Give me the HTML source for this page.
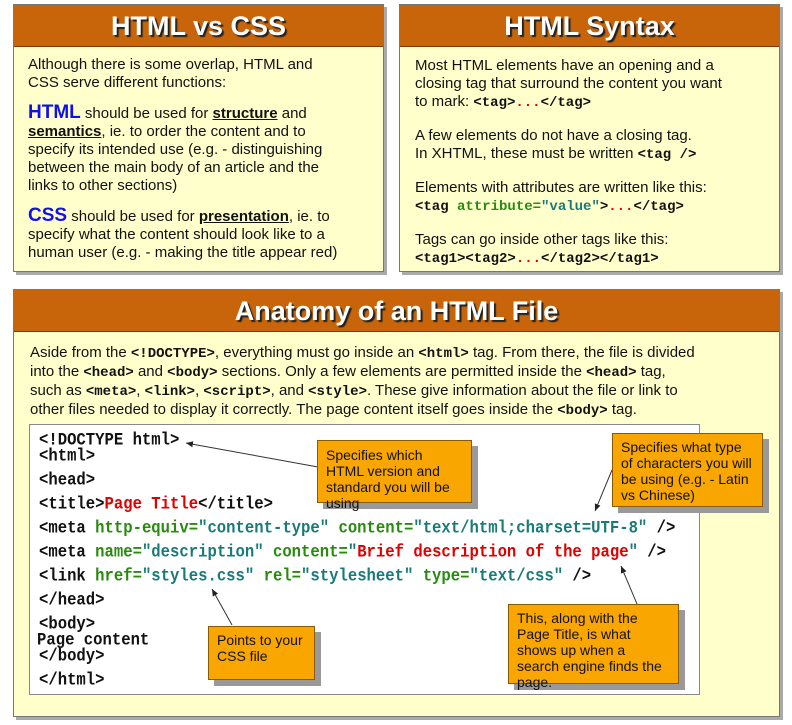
<!DOCTYPE html>
<html><head><style>
*{margin:0;padding:0;box-sizing:border-box}
body{width:792px;height:725px;background:#fff;position:relative;font-family:"Liberation Sans",sans-serif;color:#111;overflow:hidden}
.box{position:absolute;background:#ffffcc;border:1px solid #777;box-shadow:3px 3px 0 #aaa}
.hd{position:absolute;left:0;right:0;top:0;height:42px;background:#c8640a;border-bottom:1px solid #7a3a00;color:#fff;font-weight:bold;font-size:27px;text-align:center;line-height:42px;text-shadow:2px 2px 1px #222}
.t{position:absolute;font-size:15px;line-height:18px;white-space:nowrap}
.m{font-family:"Liberation Mono",monospace;font-weight:bold;font-size:14px}
.r{color:#e00000}.g{color:#2a8a10}.v{color:#1a7a7a}
.big{color:#1010ee;font-weight:bold;font-size:19px}
.u{font-weight:bold;text-decoration:underline}
.code{position:absolute;left:29px;top:424px;width:671px;height:271px;background:#fff;border:1px solid #888}
.c{position:absolute;left:39px;font-family:"Liberation Mono",monospace;font-weight:bold;font-size:15.6px;white-space:nowrap;color:#111;transform:scaleY(1.1)}
.call{position:absolute;background:#f9a600;border:1px solid #8a5a00;box-shadow:6px 6px 0 #999;font-family:"Liberation Sans Narrow","Liberation Sans",sans-serif;font-size:14px;line-height:16px;padding:6px 8px;color:#111}
</style></head><body>
<div class="box" style="left:13px;top:4px;width:371px;height:268px">
<div class="hd">HTML vs CSS</div></div>
<div class="t" style="left:28px;top:56px">Although there is some overlap, HTML and<br>CSS serve different functions:</div>
<div class="t" style="left:28px;top:104px"><span class="big">HTML</span> should be used for <span class="u">structure</span> and<br><span class="u">semantics</span>, ie. to order the content and to<br>specify its intended use (e.g. - distinguishing<br>between the main body of an article and the<br>links to other sections)</div>
<div class="t" style="left:28px;top:207px"><span class="big">CSS</span> should be used for <span class="u">presentation</span>, ie. to<br>specify what the content should look like to a<br>human user (e.g. - making the title appear red)</div>

<div class="box" style="left:399px;top:4px;width:381px;height:268px">
<div class="hd">HTML Syntax</div></div>
<div class="t" style="left:415px;top:57px">Most HTML elements have an opening and a<br>closing tag that surround the content you want<br>to mark: <span class="m">&lt;tag&gt;<span class="r">...</span>&lt;/tag&gt;</span></div>
<div class="t" style="left:415px;top:127px">A few elements do not have a closing tag.<br>In XHTML, these must be written <span class="m">&lt;tag /&gt;</span></div>
<div class="t" style="left:415px;top:179px">Elements with attributes are written like this:<br><span class="m">&lt;tag <span class="g">attribute=</span><span class="v">"value"</span>&gt;<span class="r">...</span>&lt;/tag&gt;</span></div>
<div class="t" style="left:415px;top:231px">Tags can go inside other tags like this:<br><span class="m">&lt;tag1&gt;&lt;tag2&gt;<span class="r">...</span>&lt;/tag2&gt;&lt;/tag1&gt;</span></div>

<div class="box" style="left:13px;top:289px;width:767px;height:428px">
<div class="hd">Anatomy of an HTML File</div></div>
<div class="t" style="left:30px;top:344px;line-height:18px">Aside from the <span class="m">&lt;!DOCTYPE&gt;</span>, everything must go inside an <span class="m">&lt;html&gt;</span> tag. From there, the file is divided<br>into the <span class="m">&lt;head&gt;</span> and <span class="m">&lt;body&gt;</span> sections. Only a few elements are permitted inside the <span class="m">&lt;head&gt;</span> tag,<br>such as <span class="m">&lt;meta&gt;</span>, <span class="m">&lt;link&gt;</span>, <span class="m">&lt;script&gt;</span>, and <span class="m">&lt;style&gt;</span>. These give information about the file or link to<br>other files needed to display it correctly. The page content itself goes inside the <span class="m">&lt;body&gt;</span> tag.</div>

<div class="code"></div>
<div class="c" style="top:431px">&lt;!DOCTYPE html&gt;</div>
<div class="c" style="top:447px">&lt;html&gt;</div>
<div class="c" style="top:471px">&lt;head&gt;</div>
<div class="c" style="top:495px">&lt;title&gt;<span class="r">Page Title</span>&lt;/title&gt;</div>
<div class="c" style="top:519px">&lt;meta <span class="g">http-equiv=</span><span class="v">"content-type"</span> <span class="g">content=</span><span class="v">"text/html;charset=UTF-8"</span> /&gt;</div>
<div class="c" style="top:543px">&lt;meta <span class="g">name=</span><span class="v">"description"</span> <span class="g">content=</span><span class="v">"</span><span class="r">Brief description of the page</span><span class="v">"</span> /&gt;</div>
<div class="c" style="top:567px">&lt;link <span class="g">href=</span><span class="v">"styles.css"</span> <span class="g">rel=</span><span class="v">"stylesheet"</span> <span class="g">type=</span><span class="v">"text/css"</span> /&gt;</div>
<div class="c" style="top:591px">&lt;/head&gt;</div>
<div class="c" style="top:615px">&lt;body&gt;</div>
<div class="c r" style="top:631px;left:37px">Page content</div>
<div class="c" style="top:647px">&lt;/body&gt;</div>
<div class="c" style="top:671px">&lt;/html&gt;</div>

<svg style="position:absolute;left:0;top:0" width="792" height="725">
<defs><marker id="a" markerWidth="8" markerHeight="8" refX="7" refY="4" orient="auto"><path d="M0,1 L7,4 L0,7 Z" fill="#222"/></marker></defs>
<g stroke="#333" stroke-width="1" marker-end="url(#a)">
<line x1="318" y1="467" x2="186" y2="443"/>
<line x1="612" y1="470" x2="595" y2="511"/>
<line x1="232" y1="625" x2="212" y2="589"/>
<line x1="637" y1="604" x2="621" y2="566"/>
</g></svg>

<div class="call" style="left:317px;top:440px;width:155px;height:63px">Specifies which HTML version and standard you will be using</div>
<div class="call" style="left:612px;top:433px;width:151px;height:74px;padding-top:5px">Specifies what type of characters you will be using (e.g. - Latin vs Chinese)</div>
<div class="call" style="left:208px;top:626px;width:107px;height:54px;padding-top:5px">Points to your CSS file</div>
<div class="call" style="left:508px;top:604px;width:171px;height:80px;padding-top:5px">This, along with the Page Title, is what shows up when a search engine finds the page.</div>
</body></html>
